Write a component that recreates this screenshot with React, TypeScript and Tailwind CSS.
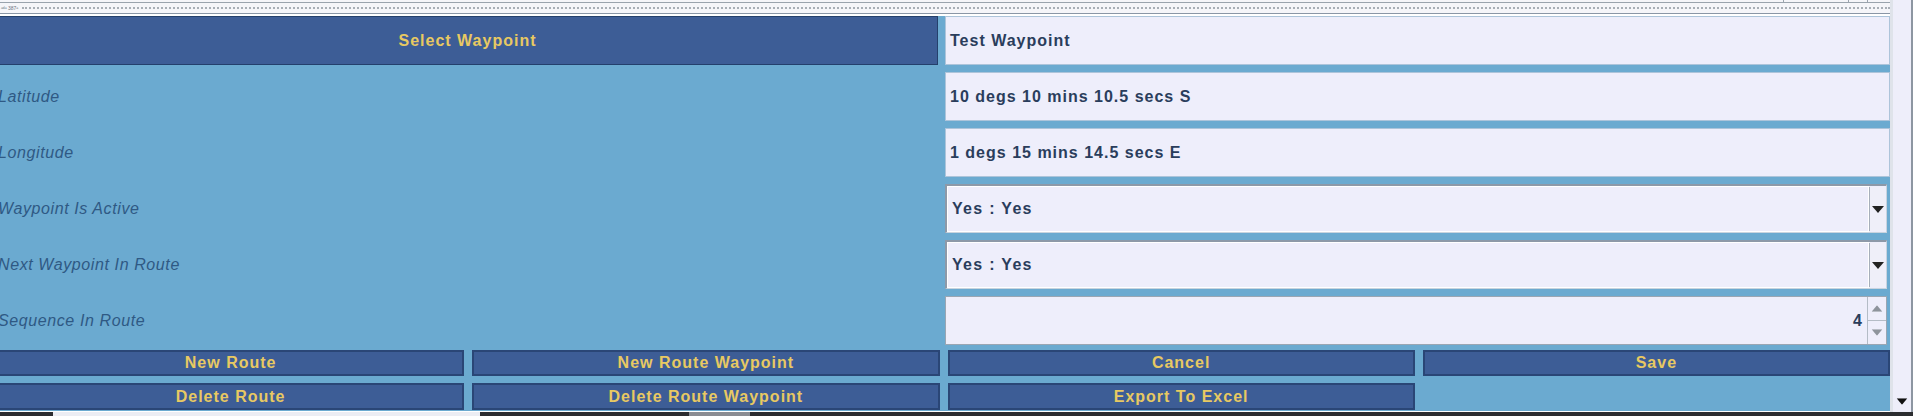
const font = "font-['Liberation_Sans',Arial,sans-serif]";

function Triangle({ className }: { className: string }) {
    return (
        <svg width="12" height="7" viewBox="0 0 12 7" className={className}>
            <polygon points="0,0 12,0 6,7" fill="currentColor" />
        </svg>
    );
}

function Label({ text }: { text: string }) {
    return (
        <div className="flex items-center pl-[1px] pt-[1px] text-[16px] italic tracking-[0.6px] text-[#2f5984]">
            {text}
        </div>
    );
}

function TextField({ value }: { value: string }) {
    return (
        <div className="flex items-center border border-[#adc4da] bg-[#eeeefb] pl-[4px] text-[16px] font-bold tracking-[1px] text-[#2a3d5c]">
            {value}
        </div>
    );
}

function SelectField({ value }: { value: string }) {
    return (
        <div className="mr-[3px] flex border-b border-l-[2px] border-r border-t-[2px] border-b-[#c9d4df] border-l-[#8d99a8] border-r-[#c9d4df] border-t-[#8d99a8] bg-[#eeeefb]">
            <div className="flex flex-1 items-center border border-white pl-[4px] text-[16px] font-bold tracking-[1.3px] text-[#2a3d5c]">
                {value}
            </div>
            <div className="my-[1px] mr-[1px] flex w-[16px] items-center justify-center border-l border-[#a6afba] bg-[#efeff9]">
                <Triangle className="text-[#222]" />
            </div>
        </div>
    );
}

function SpinnerField({ value }: { value: string }) {
    return (
        <div className="mr-[3px] flex border border-[#9aa6b3] bg-[#eeeefb]">
            <div className="flex flex-1 items-center justify-end pr-[5px] text-[16px] font-bold text-[#2a3d5c]">
                {value}
            </div>
            <div className="flex w-[19px] flex-col border-l border-[#b4bcc6]">
                <div className="flex flex-1 items-center justify-center border-b border-[#b4bcc6]">
                    <Triangle className="rotate-180 scale-90 text-[#8e949c]" />
                </div>
                <div className="flex flex-1 items-center justify-center">
                    <Triangle className="scale-90 text-[#8e949c]" />
                </div>
            </div>
        </div>
    );
}

function Button({ text }: { text: string }) {
    return (
        <div className="flex items-center justify-center border-2 border-[#2a4676] bg-[#3d5d96] text-[16px] font-bold tracking-[1px] text-[#e8c962]">
            {text}
        </div>
    );
}

export default function App() {
    return (
        <div className={`flex h-[416px] w-[1913px] flex-col overflow-hidden bg-[#eeeefa] ${font}`}>
            <div className="flex h-[412px]">
                <div className="flex w-[1890px] flex-col">
                    {/* top strip from the table above */}
                    <div className="flex h-[16px] flex-col bg-[#f5f5f9]">
                        <div className="flex h-[3px] border-b border-[#9aa3ad]">
                            <div className="flex-1" />
                            <div className="w-[65px] border-l border-[#9aa3ad]" />
                            <div className="w-[19px] border-l border-[#9aa3ad]" />
                            <div className="w-[23px] border-l border-[#9aa3ad]" />
                        </div>
                        <div className="flex h-[10px] items-center">
                            <span className="pl-[1px] text-[5px] leading-none text-[#6a7280]">ᵃᵈᵃ 387ᵃ</span>
                            <div className="ml-[4px] h-[2px] flex-1 border-t-2 border-dotted border-[#a8aeb6]" />
                        </div>
                        <div className="h-[3px] border-t border-[#8a96a6] bg-white" />
                    </div>
                    <div className="flex flex-1 flex-col border-b border-white bg-[#6baad0]">
                        <div className="-ml-[3px] grid w-[1893px] grid-cols-[941px_1fr] grid-rows-[repeat(6,49px)] gap-x-[7px] gap-y-[7px]">
                            <div className="flex items-center justify-center border border-[#24406c] bg-[#3d5d96] text-[16px] font-bold tracking-[1px] text-[#e8c962]">
                                Select Waypoint
                            </div>
                            <TextField value="Test Waypoint" />
                            <Label text="Latitude" />
                            <TextField value="10 degs 10 mins 10.5 secs S" />
                            <Label text="Longitude" />
                            <TextField value="1 degs 15 mins 14.5 secs E" />
                            <Label text="Waypoint Is Active" />
                            <SelectField value="Yes : Yes" />
                            <Label text="Next Waypoint In Route" />
                            <SelectField value="Yes : Yes" />
                            <Label text="Sequence In Route" />
                            <SpinnerField value="4" />
                        </div>
                        <div className="-ml-[3px] mt-[5px] grid w-[1893px] grid-cols-4 grid-rows-[26px_27px] gap-x-[8px] gap-y-[7px]">
                            <Button text="New Route" />
                            <Button text="New Route Waypoint" />
                            <Button text="Cancel" />
                            <Button text="Save" />
                            <Button text="Delete Route" />
                            <Button text="Delete Route Waypoint" />
                            <Button text="Export To Excel" />
                        </div>
                    </div>
                </div>
                {/* vertical scrollbar */}
                <div className="flex w-[23px] flex-col justify-end border-l-[3px] border-l-[#dfe3ea] border-r-2 border-r-[#8d96a2] bg-[#eeeefa]">
                    <div className="mb-[1px] flex h-[19px] items-center justify-center pr-[1px]">
                        <Triangle className="scale-90 text-[#111]" />
                    </div>
                </div>
            </div>
            {/* bottom strip */}
            <div className="flex h-[4px] bg-[#2c2d30]">
                <div className="w-[53px]" />
                <div className="w-[427px] bg-[#ecedf3]" />
                <div className="w-[209px]" />
                <div className="w-[61px] bg-[#8a8c92]" />
            </div>
        </div>
    );
}
